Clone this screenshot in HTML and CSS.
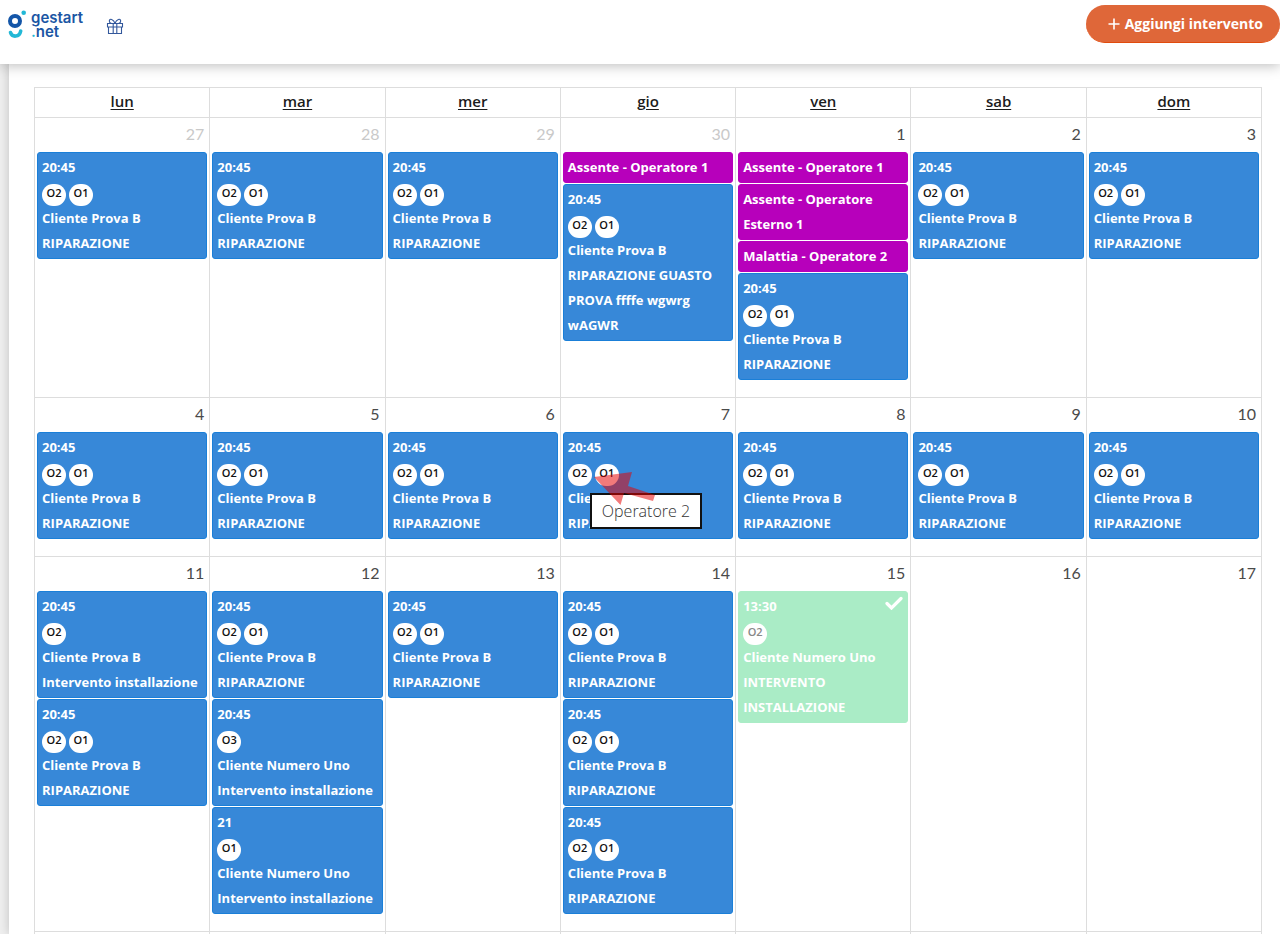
FILE: index.html
```html
<!DOCTYPE html>
<html lang="it">
<head>
<meta charset="utf-8">
<title>gestart.net – Calendario</title>
<link rel="stylesheet" href="styles.css">
</head>
<body>
<div class="app">
<header class="topbar">
  <a class="logo" href="#" aria-label="gestart.net">
    <svg class="logo-mark" width="20" height="30" viewBox="0 0 20 30" aria-hidden="true">
      <circle cx="7" cy="12" r="5" fill="none" stroke="#1456a8" stroke-width="4"/>
      <circle cx="15.700" cy="3.700" r="2.300" fill="#22b8d6"/>
      <path d="M2.500 23.500c1.500 5 9 5 10.200-1.500" fill="none" stroke="#22b8d6" stroke-width="3.600" stroke-linecap="round"/>
    </svg>
    <span class="logo-text"><span>gestart</span><span><span class="logo-dot">.</span>net</span></span>
  </a>
  <button class="gift" type="button" aria-label="Novità">
    <svg width="18" height="17" viewBox="0 0 18 17" fill="none" stroke="#33589c" stroke-width="1.100" aria-hidden="true">
      <path d="M1.500 5.500h15v3.500h-15zM2.500 9v6.500h13V9M7.200 5.500v10M10.800 5.500v10M9 5.300C7.500 1 3.500 0 3.300 3c0 1.500 1 2.300 2 2.400M9 5.300C10.500 1 14.500 0 14.700 3c0 1.500-1 2.300-2 2.400"/>
    </svg>
  </button>
  <button class="add" type="button">
    <svg width="12" height="12" viewBox="0 0 12 12" fill="none" stroke="#fff" stroke-width="1.600" aria-hidden="true"><path d="M6 .5v11M.5 6h11"/></svg>
    Aggiungi intervento
  </button>
</header>
<main class="page">
<table class="calendar">
<thead>
<tr>
  <th scope="col"><a href="#">lun</a></th><th scope="col"><a href="#">mar</a></th><th scope="col"><a href="#">mer</a></th><th scope="col"><a href="#">gio</a></th><th scope="col"><a href="#">ven</a></th><th scope="col"><a href="#">sab</a></th><th scope="col"><a href="#">dom</a></th>
</tr>
</thead>
<tbody>
<tr>
  <td class="other"><div class="day">27</div>
    <div class="event"><div>20:45</div><div class="ops"><span>O2</span><span>O1</span></div><div>Cliente Prova B</div><div>RIPARAZIONE</div></div></td>
  <td class="other"><div class="day">28</div>
    <div class="event"><div>20:45</div><div class="ops"><span>O2</span><span>O1</span></div><div>Cliente Prova B</div><div>RIPARAZIONE</div></div></td>
  <td class="other"><div class="day">29</div>
    <div class="event"><div>20:45</div><div class="ops"><span>O2</span><span>O1</span></div><div>Cliente Prova B</div><div>RIPARAZIONE</div></div></td>
  <td class="other"><div class="day">30</div>
    <div class="event absent">Assente - Operatore 1</div>
    <div class="event"><div>20:45</div><div class="ops"><span>O2</span><span>O1</span></div><div>Cliente Prova B</div><div>RIPARAZIONE GUASTO PROVA ffffe wgwrg wAGWR</div></div></td>
  <td><div class="day">1</div>
    <div class="event absent">Assente - Operatore 1</div>
    <div class="event absent">Assente - Operatore Esterno 1</div>
    <div class="event absent">Malattia - Operatore 2</div>
    <div class="event"><div>20:45</div><div class="ops"><span>O2</span><span>O1</span></div><div>Cliente Prova B</div><div>RIPARAZIONE</div></div></td>
  <td><div class="day">2</div>
    <div class="event"><div>20:45</div><div class="ops"><span>O2</span><span>O1</span></div><div>Cliente Prova B</div><div>RIPARAZIONE</div></div></td>
  <td><div class="day">3</div>
    <div class="event"><div>20:45</div><div class="ops"><span>O2</span><span>O1</span></div><div>Cliente Prova B</div><div>RIPARAZIONE</div></div></td>
</tr>
<tr>
  <td><div class="day">4</div>
    <div class="event"><div>20:45</div><div class="ops"><span>O2</span><span>O1</span></div><div>Cliente Prova B</div><div>RIPARAZIONE</div></div></td>
  <td><div class="day">5</div>
    <div class="event"><div>20:45</div><div class="ops"><span>O2</span><span>O1</span></div><div>Cliente Prova B</div><div>RIPARAZIONE</div></div></td>
  <td><div class="day">6</div>
    <div class="event"><div>20:45</div><div class="ops"><span>O2</span><span>O1</span></div><div>Cliente Prova B</div><div>RIPARAZIONE</div></div></td>
  <td><div class="day">7</div>
    <div class="event"><div>20:45</div><div class="ops"><span>O2</span><span>O1</span></div><div>Cliente Prova B</div><div>RIPARAZIONE</div>
      <div class="tooltip" role="tooltip">Operatore 2</div>
      <svg class="pointer" width="64" height="36" viewBox="0 0 64 36" aria-hidden="true"><path d="M1 7 39 2 35 16 62 25 60 31 31 23 27.500 35z" fill="#e60000" fill-opacity=".52"/></svg>
    </div></td>
  <td><div class="day">8</div>
    <div class="event"><div>20:45</div><div class="ops"><span>O2</span><span>O1</span></div><div>Cliente Prova B</div><div>RIPARAZIONE</div></div></td>
  <td><div class="day">9</div>
    <div class="event"><div>20:45</div><div class="ops"><span>O2</span><span>O1</span></div><div>Cliente Prova B</div><div>RIPARAZIONE</div></div></td>
  <td><div class="day">10</div>
    <div class="event"><div>20:45</div><div class="ops"><span>O2</span><span>O1</span></div><div>Cliente Prova B</div><div>RIPARAZIONE</div></div></td>
</tr>
<tr>
  <td><div class="day">11</div>
    <div class="event"><div>20:45</div><div class="ops"><span>O2</span></div><div>Cliente Prova B</div><div>Intervento installazione</div></div>
    <div class="event"><div>20:45</div><div class="ops"><span>O2</span><span>O1</span></div><div>Cliente Prova B</div><div>RIPARAZIONE</div></div></td>
  <td><div class="day">12</div>
    <div class="event"><div>20:45</div><div class="ops"><span>O2</span><span>O1</span></div><div>Cliente Prova B</div><div>RIPARAZIONE</div></div>
    <div class="event"><div>20:45</div><div class="ops"><span>O3</span></div><div>Cliente Numero Uno</div><div>Intervento installazione</div></div>
    <div class="event"><div>21</div><div class="ops"><span>O1</span></div><div>Cliente Numero Uno</div><div>Intervento installazione</div></div></td>
  <td><div class="day">13</div>
    <div class="event"><div>20:45</div><div class="ops"><span>O2</span><span>O1</span></div><div>Cliente Prova B</div><div>RIPARAZIONE</div></div></td>
  <td><div class="day">14</div>
    <div class="event"><div>20:45</div><div class="ops"><span>O2</span><span>O1</span></div><div>Cliente Prova B</div><div>RIPARAZIONE</div></div>
    <div class="event"><div>20:45</div><div class="ops"><span>O2</span><span>O1</span></div><div>Cliente Prova B</div><div>RIPARAZIONE</div></div>
    <div class="event"><div>20:45</div><div class="ops"><span>O2</span><span>O1</span></div><div>Cliente Prova B</div><div>RIPARAZIONE</div></div></td>
  <td><div class="day">15</div>
    <div class="event done"><div class="first">13:30
      <svg width="18" height="14" viewBox="0 0 18 14" aria-label="Completato"><path d="M2 7.500 6.500 12 16 2.500" fill="none" stroke="#fff" stroke-width="3.200" stroke-linecap="round"/></svg></div><div class="ops"><span>O2</span></div><div>Cliente Numero Uno</div><div>INTERVENTO INSTALLAZIONE</div></div></td>
  <td><div class="day">16</div></td>
  <td><div class="day">17</div></td>
</tr>
<tr><td></td><td></td><td></td><td></td><td></td><td></td><td></td></tr>
</tbody>
</table>
</main>
</div>
</body>
</html>
```
FILE: styles.css
```css
* { box-sizing: border-box; }

body {
  margin: 0;
  background: #efefef;
  color: #4a4a4a;
  font-family: "Open Sans", "Noto Sans", sans-serif;
  font-size: 16px;
}

.app {
  display: flex;
  flex-direction: column;
  height: 100vh;
  overflow: hidden;
}

.topbar {
  position: relative;
  display: flex;
  align-items: flex-start;
  flex: none;
  height: 64px;
  padding: 5px 0 0 8px;
  background: #fff;
  box-shadow: 0 2px 12px rgba(0, 0, 0, .25);
}

.logo {
  display: flex;
  gap: 3px;
  padding-top: 4px;
  color: #1b56a4;
  text-decoration: none;
}

.logo-text {
  display: flex;
  flex-direction: column;
  font-family: Inter, sans-serif;
  font-size: 15px;
  font-weight: 600;
  line-height: 14px;
  padding-top: 2px;
}

.logo-dot { color: #22b8d6; }

.gift {
  display: flex;
  margin: 13px 0 0 23px;
  padding: 0;
  border: 0;
  background: none;
}

.add {
  display: flex;
  align-items: center;
  gap: 5px;
  height: 38px;
  margin-left: auto;
  padding: 0 17px 0 22px;
  border: 0;
  border-bottom: 1px solid #e14b0c;
  border-radius: 19px;
  background: #df6739;
  color: #fff;
  font: 700 14px "Open Sans", sans-serif;
}

.page {
  flex: 1;
  min-height: 0;
  margin-left: 9px;
  padding: 23px 18px 0 25px;
  background: #fff;
  box-shadow: 0 0 10px rgba(0, 0, 0, .2);
}

.calendar {
  width: 100%;
  table-layout: fixed;
  border-collapse: collapse;
}

.calendar th,
.calendar td {
  border: 1px solid #ddd;
}

.calendar th {
  height: 30px;
  padding: 0 0 2px;
  font-size: 15px;
  font-weight: 600;
  line-height: 27px;
}

.calendar th a {
  color: #1c1c1c;
  text-underline-offset: 2px;
}

.calendar td {
  height: 32px;
  padding: 0 2px 17px 2px;
  vertical-align: top;
}

.day {
  height: 34px;
  padding-right: 3px;
  font-family: Lato, sans-serif;
  line-height: 31px;
  text-align: right;
}

.other .day { color: #c9c9c9; }

.event {
  position: relative;
  padding: 2px 4px;
  border: 1px solid #1a7fd8;
  border-radius: 3px;
  background: #3788d8;
  color: #fff;
  font-size: 13px;
  font-weight: 700;
  line-height: 25px;
}

.event + .event { margin-top: 1px; }

.absent {
  border-color: #b700bb;
  background: #b700bb;
}

.done {
  border-color: #aaecc6;
  background: #aaecc6;
}

.first {
  display: flex;
  justify-content: space-between;
}

.first svg { margin-top: 2px; }

.ops {
  display: flex;
  align-items: flex-end;
  gap: 3px;
  height: 26px;
}

.ops span {
  width: 24px;
  height: 22px;
  border-radius: 12px;
  background: #fff;
  color: #111;
  font-size: 11px;
  font-weight: 600;
  line-height: 18px;
  text-align: center;
}

.done .ops span { color: #888; }

.tooltip {
  position: absolute;
  top: 60px;
  left: 26px;
  padding: 0 10px;
  border: 2px solid #111;
  background: #fff;
  color: #333;
  font-size: 16px;
  font-weight: 300;
  line-height: 32px;
  white-space: nowrap;
}

.pointer {
  position: absolute;
  top: 37px;
  left: 29px;
}
```
